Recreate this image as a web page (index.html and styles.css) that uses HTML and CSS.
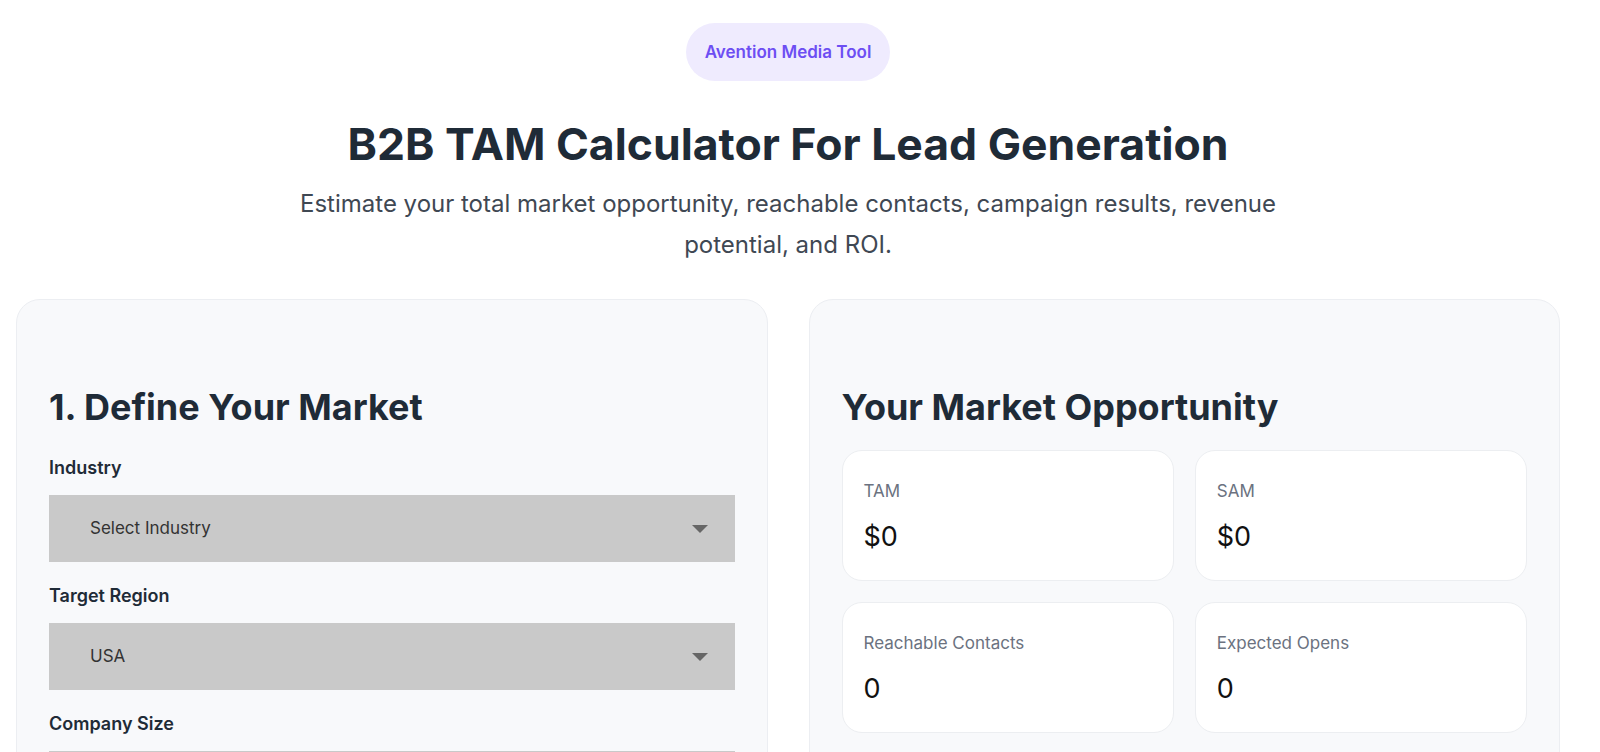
FILE: index.html
```html
<!DOCTYPE html>
<html lang="en">
<head>
    <meta charset="UTF-8">
    <meta name="viewport" content="width=device-width, initial-scale=1.0">
    <title>B2B TAM Calculator For Lead Generation</title>
    <link rel="stylesheet" href="styles.css">
</head>
<body>
    <div class="page">
        <div class="hero">
            <span class="badge">Avention Media Tool</span>
            <h1>B2B TAM Calculator For Lead Generation</h1>
            <p class="lead">Estimate your total market opportunity, reachable contacts, campaign results, revenue potential, and ROI.</p>
        </div>

        <div class="columns">
            <div class="panel">
                <h2>1. Define Your Market</h2>
                <label class="field-label" for="industry">Industry</label>
                <div class="select-wrap">
                    <select id="industry">
                        <option>Select Industry</option>
                        <option>Software &amp; SaaS</option>
                        <option>Manufacturing</option>
                        <option>Healthcare</option>
                        <option>Financial Services</option>
                    </select>
                </div>
                <label class="field-label" for="region">Target Region</label>
                <div class="select-wrap">
                    <select id="region">
                        <option>USA</option>
                        <option>Europe</option>
                        <option>Asia Pacific</option>
                        <option>Global</option>
                    </select>
                </div>
                <label class="field-label" for="size">Company Size</label>
                <div class="select-wrap">
                    <select id="size">
                        <option>All Sizes</option>
                        <option>1-50 employees</option>
                        <option>51-500 employees</option>
                        <option>500+ employees</option>
                    </select>
                </div>
            </div>

            <div class="panel">
                <h2>Your Market Opportunity</h2>
                <div class="stats">
                    <div class="stat">
                        <div class="stat-label">TAM</div>
                        <div class="stat-value">$0</div>
                    </div>
                    <div class="stat">
                        <div class="stat-label">SAM</div>
                        <div class="stat-value">$0</div>
                    </div>
                    <div class="stat">
                        <div class="stat-label">Reachable Contacts</div>
                        <div class="stat-value">0</div>
                    </div>
                    <div class="stat">
                        <div class="stat-label">Expected Opens</div>
                        <div class="stat-value">0</div>
                    </div>
                </div>
            </div>
        </div>
    </div>
</body>
</html>
```

FILE: styles.css
```css
body {
    font-family: Inter, "Noto Sans", sans-serif;
    margin: 0;
    padding: 0;
    background: #ffffff;
    color: #1f2b37;
}
.page {
    width: 1544px;
    margin-left: 16px;
    padding-top: 23px;
}
.hero {
    text-align: center;
}
.badge {
    display: inline-block;
    height: 58px;
    line-height: 58px;
    padding: 0 19px;
    border-radius: 29px;
    background: #efebfe;
    color: #6d4ef3;
    font-size: 17px;
    font-weight: 600;
}
h1 {
    margin: 37px 0 0;
    font-size: 44.5px;
    line-height: 1.2;
    font-weight: 700;
    color: #1f2b37;
}
.lead {
    max-width: 1000px;
    margin: 12px auto 0;
    font-size: 24px;
    line-height: 41px;
    color: #3f4853;
}
.columns {
    display: grid;
    grid-template-columns: 1fr 1fr;
    gap: 41px;
    margin-top: 34px;
}
.panel {
    background: #f8f9fb;
    border: 1px solid #eceef2;
    border-radius: 24px;
    padding: 32px;
    min-height: 500px;
}
h2 {
    margin: 54px 0 0;
    font-size: 36px;
    line-height: 1.2;
    font-weight: 700;
    color: #1f2b37;
}
.field-label {
    display: block;
    margin: 22px 0 15px;
    font-size: 18px;
    line-height: 24px;
    font-weight: 600;
    color: #1f2b37;
}
h2 + .field-label {
    margin-top: 26px;
}
.select-wrap {
    position: relative;
}
.select-wrap select {
    appearance: none;
    -webkit-appearance: none;
    display: block;
    width: 100%;
    height: 67px;
    padding: 0 60px 0 41px;
    border: 0;
    border-radius: 0;
    background: #c9c9c9;
    color: #333333;
    font-family: inherit;
    font-size: 17px;
}
/* dropdown caret */
.select-wrap::after {
    content: "";
    position: absolute;
    right: 27px;
    top: 30px;
    border-left: 8px solid transparent;
    border-right: 8px solid transparent;
    border-top: 8px solid #666666;
    pointer-events: none;
}
.stats {
    display: grid;
    grid-template-columns: 1fr 1fr;
    gap: 21px;
    margin-top: 20px;
}
.stat {
    background: #ffffff;
    border: 1px solid #eceef1;
    border-radius: 20px;
    height: 131px;
    box-sizing: border-box;
    padding: 30px 21px 0;
}
.stat-label {
    font-size: 17px;
    line-height: 20px;
    color: #6b7280;
}
.stat-value {
    margin-top: 19px;
    font-size: 27px;
    line-height: 34px;
    color: #111111;
}
```
